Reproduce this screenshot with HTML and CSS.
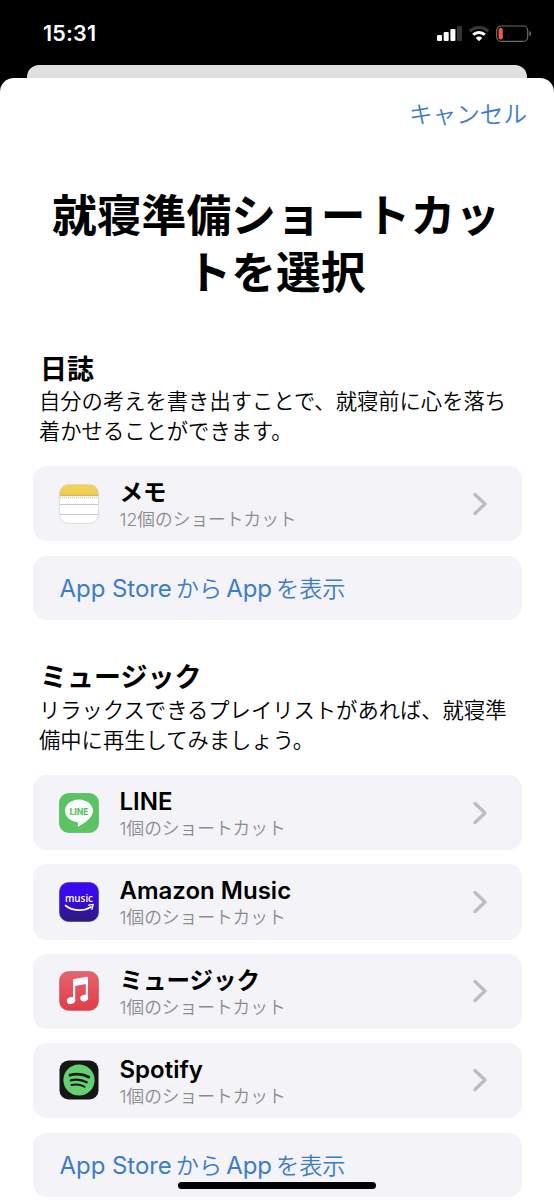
FILE: index.html
```
<!DOCTYPE html>
<html lang="ja">
<head>
<meta charset="utf-8">
<title>就寝準備ショートカットを選択</title>
<link rel="stylesheet" href="styles.css">
</head>
<body>
<div class="phone">
  <header class="status">
    <span class="time">15:31</span>
    <svg class="indicators" width="96" height="18" viewBox="0 0 96 18">
      <g fill="#fff"><rect x="0" y="10" width="5" height="6" rx="1"/><rect x="6.7" y="7" width="5" height="9" rx="1"/><rect x="13.4" y="4" width="5" height="12" rx="1"/></g>
      <rect x="20" y="1" width="5" height="15" rx="1" fill="#333"/>
      <path d="M32.800 6.200a13 13 0 0 1 18.400 0" fill="none" stroke="#3a3a3a" stroke-width="3"/>
      <path d="M36.200 9.800a8.200 8.200 0 0 1 11.600 0" fill="none" stroke="#fff" stroke-width="3"/>
      <path d="M42 16.200l-3.200-3.300a4.600 4.600 0 0 1 6.400 0z" fill="#fff"/>
      <rect x="59.700" y="1" width="31" height="15.400" rx="4.500" fill="none" stroke="#706c6c" stroke-width="1.200"/>
      <rect x="61.600" y="3" width="4.200" height="11.500" rx="1.800" fill="#e9594d"/>
      <path d="M92.400 6.100c2.200.9 2.200 4.300 0 5.200z" fill="#706c6c"/>
    </svg>
  </header>
  <div class="back-sheet"></div>
  <main class="sheet">
    <div class="nav"><a class="cancel">キャンセル</a></div>
    <h1 class="title">就寝準備ショートカッ<br>トを選択</h1>

    <section class="section">
      <h2 class="heading">日誌</h2>
      <p class="desc">自分の考えを書き出すことで、就寝前に心を落ち<br>着かせることができます。</p>
      <div class="cards">
        <div class="card">
          <svg class="icon" viewBox="0 0 40 40">
            <defs>
              <clipPath id="tile"><rect x=".5" y=".5" width="39" height="39" rx="9"/></clipPath>
              <linearGradient id="yellow" x2="0" y2="1"><stop stop-color="#f3d561"/><stop offset="1" stop-color="#efca46"/></linearGradient>
            </defs>
            <g clip-path="url(#tile)">
              <rect width="40" height="40" fill="#fff"/>
              <rect width="40" height="11.500" fill="url(#yellow)"/>
              <path d="M0 11.700h40" stroke="#b9a96d" stroke-width=".9"/>
              <path d="M1 13.800h39" stroke="#b5b5b5" stroke-width="1" stroke-dasharray="1 1"/>
              <path d="M0 20.500h40M0 30.500h40" stroke="#c8c8ca"/>
            </g>
            <rect x=".5" y=".5" width="39" height="39" rx="9" fill="none" stroke="#d7d3c9" stroke-width=".7"/>
          </svg>
          <div class="label"><div class="name kana">メモ</div><div class="count"><span class="num">12</span>個のショートカット</div></div>
          <svg class="chevron" viewBox="0 0 16 24"><path d="M3 2.500l10 9.500-10 9.500"/></svg>
        </div>
        <a class="card link"><span class="latin">App Store</span><span class="jp">から</span><span class="latin">App</span><span class="jp">を表示</span></a>
      </div>
    </section>

    <section class="section second">
      <h2 class="heading">ミュージック</h2>
      <p class="desc">リラックスできるプレイリストがあれば、就寝準<br>備中に再生してみましょう。</p>
      <div class="cards">
        <div class="card">
          <svg class="icon" viewBox="0 0 40 40">
            <rect x=".5" y=".5" width="39" height="39" rx="9" fill="#5ac463" stroke="#4faa59" stroke-width=".6"/>
            <path d="M20 6.500c-7.800 0-14 5-14 11.300 0 5.800 5 10.400 12 11.200 1.300.3 1.100 1.500.8 3.500-.1.900.2 1.300 1.200.7C25 30.400 34 25 34 17.800 34 11.500 27.800 6.500 20 6.500z" fill="#fff"/>
            <text x="20" y="21.600" class="line-logo" text-anchor="middle" textLength="19" lengthAdjust="spacingAndGlyphs">LINE</text>
          </svg>
          <div class="label"><div class="name">LINE</div><div class="count"><span class="num">1</span>個のショートカット</div></div>
          <svg class="chevron" viewBox="0 0 16 24"><path d="M3 2.500l10 9.500-10 9.500"/></svg>
        </div>
        <div class="card">
          <svg class="icon" viewBox="0 0 40 40">
            <defs><linearGradient id="indigo" x2="0" y2="1"><stop stop-color="#3b0bf0"/><stop offset=".4" stop-color="#3908e4"/><stop offset="1" stop-color="#2b1d72"/></linearGradient></defs>
            <rect x=".5" y=".5" width="39" height="39" rx="9" fill="url(#indigo)" stroke="#402b9c" stroke-width=".6"/>
            <text x="20" y="20.300" class="music-logo" text-anchor="middle" textLength="28" lengthAdjust="spacingAndGlyphs">music</text>
            <path d="M6.500 23.500c7 5.800 18 6 25.500 1.500" fill="none" stroke="#fff" stroke-width="1.700" stroke-linecap="round"/>
            <path d="M29.500 23.200l4.800-.8-1.400 4.800" fill="none" stroke="#fff" stroke-width="1.300" stroke-linecap="round" stroke-linejoin="round"/>
          </svg>
          <div class="label"><div class="name amazon">Amazon Music</div><div class="count"><span class="num">1</span>個のショートカット</div></div>
          <svg class="chevron" viewBox="0 0 16 24"><path d="M3 2.500l10 9.500-10 9.500"/></svg>
        </div>
        <div class="card">
          <svg class="icon" viewBox="0 0 40 40">
            <defs><linearGradient id="coral" x2="0" y2="1"><stop stop-color="#e76370"/><stop offset="1" stop-color="#df3d49"/></linearGradient></defs>
            <rect x=".5" y=".5" width="39" height="39" rx="9" fill="url(#coral)" stroke="#c75b63" stroke-width=".6"/>
            <g fill="#fff">
              <path d="M14 9.300c0-.7.3-1 1-1.200l12.800-2.300c.7-.1 1.200.2 1.200.9v20h-2.200V13l-10.600 1.900v14.600H14z"/>
              <ellipse cx="12.100" cy="29.600" rx="4.200" ry="3.400" transform="rotate(-18 12.100 29.600)"/>
              <ellipse cx="25.200" cy="27.100" rx="4" ry="3.300" transform="rotate(-18 25.200 27.100)"/>
            </g>
          </svg>
          <div class="label"><div class="name kana">ミュージック</div><div class="count"><span class="num">1</span>個のショートカット</div></div>
          <svg class="chevron" viewBox="0 0 16 24"><path d="M3 2.500l10 9.500-10 9.500"/></svg>
        </div>
        <div class="card">
          <svg class="icon" viewBox="0 0 40 40">
            <rect x=".5" y=".5" width="39" height="39" rx="9" fill="#161614"/>
            <circle cx="20" cy="20" r="15.600" fill="#65d073"/>
            <g fill="none" stroke="#161a16" stroke-linecap="round"><path d="M11 15.200c6-1.700 13-1.200 18.700 1.800" stroke-width="2.900"/><path d="M11.700 20.300c5.500-1.400 11-.8 16 1.900" stroke-width="2.300"/><path d="M12.400 25c4.600-1 9-.6 13.200 1.800" stroke-width="1.900"/></g>
          </svg>
          <div class="label"><div class="name spotify">Spotify</div><div class="count"><span class="num">1</span>個のショートカット</div></div>
          <svg class="chevron" viewBox="0 0 16 24"><path d="M3 2.500l10 9.500-10 9.500"/></svg>
        </div>
        <a class="card link"><span class="latin">App Store</span><span class="jp">から</span><span class="latin">App</span><span class="jp">を表示</span></a>
      </div>
    </section>
  </main>
  <div class="home-bar"></div>
</div>
</body>
</html>
```
FILE: styles.css
```
* { box-sizing: border-box; }
body { margin: 0; background: #000; font-family: Inter, "Noto Sans CJK JP", sans-serif; color: #000; }
.phone { position: relative; width: 554px; height: 1200px; overflow: hidden; background: #000; display: flex; flex-direction: column; }
.status { height: 65px; flex: none; display: flex; justify-content: space-between; align-items: flex-start; padding: 20px 21px 0 43px; }
.time { color: #fff; font-size: 21.5px; line-height: 26px; font-weight: 580; letter-spacing: .2px; }
.indicators { margin-top: 5px; }
.back-sheet { height: 13px; flex: none; margin: 0 27px; background: #e0e0e0; border-radius: 12px 12px 0 0; }
.sheet { flex: 1; background: #fff; border-radius: 14px 14px 0 0; padding: 0 32px; }
.nav { display: flex; justify-content: flex-end; padding-top: 20px; margin-right: -5px; }
.cancel { color: #3d7cc9; font-size: 23.6px; line-height: 34px; font-weight: 350; }
.title { margin: 56px -6px 0 -8px; font-size: 44.8px; line-height: 57px; font-weight: 700; text-align: center; }
.section { padding-top: 50px; }
.second { padding-top: 40px; }
.heading { margin: 0; padding-left: 8px; font-size: 27px; line-height: 36px; font-weight: 700; }
.desc { margin: -2.5px 0 0; padding-left: 7px; font-size: 21.3px; line-height: 30px; font-weight: 350; white-space: nowrap; }
.second .desc { margin-top: -1px; }
.cards { display: flex; flex-direction: column; gap: 14px; padding-top: 20.5px; }
.second .cards { padding-top: 20px; }
.card { width: 489px; height: 75.2px; margin-left: .5px; border-radius: 14px; background: #f3f3f8; display: flex; align-items: center; padding: 0 34px 0 26px; }
.icon { width: 40px; height: 40px; flex: none; }
.label { flex: 1; padding: 3px 0 0 21px; }
.name { font-size: 24px; line-height: 29px; font-weight: 600; height: 29px; }
.kana { font-size: 23.5px; font-weight: 700; }
.count { font-size: 17.7px; line-height: 24px; color: #8b8b90; font-weight: 350; padding-top: 1px; }
.chevron { width: 16px; height: 24px; fill: none; stroke: #bdbdc1; stroke-width: 3.3; stroke-linecap: round; stroke-linejoin: round; }
.link { height: 64px; margin-top: 1px; color: #3d7cc9; font-size: 24px; padding-left: 27px; white-space: nowrap; }
.link .latin { letter-spacing: -.05px; padding-top: 1px; }
.link .jp { margin: 0 4px; font-size: 23.2px; font-weight: 350; padding-bottom: 2px; }
.line-logo { font: 800 8.5px Inter, sans-serif; fill: #5ac463; }
.music-logo { font: 600 10.5px "Open Sans", sans-serif; fill: #fff; }
.home-bar { position: absolute; left: 178px; top: 1182px; width: 198px; height: 7px; border-radius: 4px; background: #000; }
```
